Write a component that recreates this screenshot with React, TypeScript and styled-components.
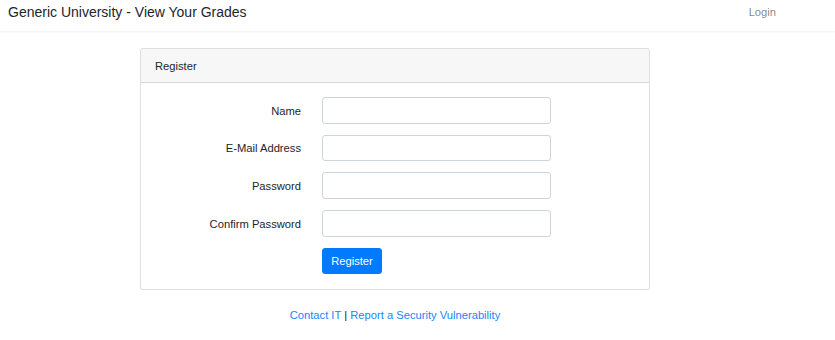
import React from 'react'
import styled, { createGlobalStyle } from 'styled-components';

const GlobalStyle = createGlobalStyle`
  body {
    margin: 0;
    background: #ffffff;
    font-family: "Liberation Sans", Arial, sans-serif;
    font-size: 11.2px;
    color: #212529;
  }
`;

const Navbar = styled.nav`
  height: 31px;
  display: flex;
  align-items: center;
  justify-content: space-between;
  padding: 0 59px 0 8px;
  background: #ffffff;
  box-shadow: 0 1px 2px rgba(0, 0, 0, 0.06);
  margin-bottom: 17px;
`;

const Brand = styled.a`
  font-size: 14px;
  color: #212529;
  text-decoration: none;
  margin-top: -7px;
`;

const NavLink = styled.a`
  color: rgba(0, 0, 0, 0.5);
  text-decoration: none;
  margin-top: -7px;
`;

const Main = styled.main`
  width: 790px;
  display: flex;
  flex-direction: column;
  align-items: center;
`;

const Card = styled.div`
  width: 508px;
  border: 1px solid rgba(0, 0, 0, 0.125);
  border-radius: 3px;
  background: #ffffff;
`;

const CardHeader = styled.div`
  height: 33px;
  display: flex;
  align-items: center;
  padding: 0 14px;
  background: #f7f7f7;
  border-bottom: 1px solid rgba(0, 0, 0, 0.125);
  border-radius: 3px 3px 0 0;
`;

const CardBody = styled.form`
  padding: 14px 16px 15px 16px;
  display: grid;
  grid-template-columns: 144px 229px;
  column-gap: 21px;
  row-gap: 11.2px;
  align-items: center;
`;

const Label = styled.label`
  text-align: right;
  padding-top: 1px;
`;

const Input = styled.input`
  box-sizing: border-box;
  height: 26.5px;
  width: 100%;
  border: 1px solid #ced4da;
  border-radius: 3px;
  padding: 0 10px;
  font: inherit;
  background: #ffffff;
`;

const Button = styled.button`
  grid-column: 2;
  justify-self: start;
  height: 26px;
  width: 60px;
  border: 1px solid #007bff;
  border-radius: 3px;
  background: #007bff;
  color: #ffffff;
  font: inherit;
  padding: 1px 0 0;
`;

const Footer = styled.p`
  margin: 19px 0 0;
  text-align: center;
`;

const FooterLink = styled.a`
  color: #1a85ff;
  text-decoration: none;
`;

const fields = ['Name', 'E-Mail Address', 'Password', 'Confirm Password'];

const App = () => {
  return (
    <>
      <GlobalStyle />
      <Navbar>
        <Brand href="#">Generic University - View Your Grades</Brand>
        <NavLink href="#">Login</NavLink>
      </Navbar>
      <Main>
        <Card>
          <CardHeader>Register</CardHeader>
          <CardBody onSubmit={(e) => e.preventDefault()}>
            {fields.map((f) => (
              <React.Fragment key={f}>
                <Label>{f}</Label>
                <Input type={f.includes('Password') ? 'password' : 'text'} />
              </React.Fragment>
            ))}
            <Button type="submit">Register</Button>
          </CardBody>
        </Card>
        <Footer>
          <FooterLink href="#">Contact IT</FooterLink> | <FooterLink href="#">Report a Security Vulnerability</FooterLink>
        </Footer>
      </Main>
    </>
  )
}

export default App
